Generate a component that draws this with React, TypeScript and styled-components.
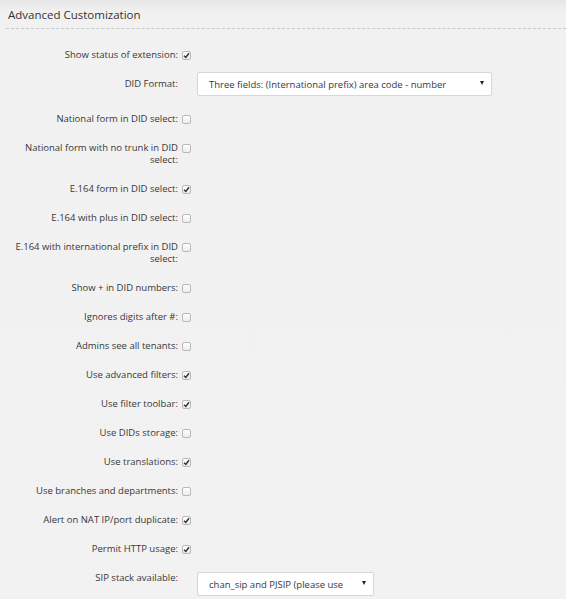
import React from "react";
import styled, { createGlobalStyle } from "styled-components";

const Global = createGlobalStyle`
  html, body {
    margin: 0;
    padding: 0;
    background: #f2f2f2;
  }
  body {
    font-family: "Open Sans", "Liberation Sans", sans-serif;
    color: #3a3a3a;
  }
`;

const Page = styled.div`
  width: 566px;
  height: 599px;
  overflow: hidden;
  background: linear-gradient(to bottom, #e6e6e6 0px, #f1f1f1 12px, #f2f2f2 100%);
`;

const Header = styled.div`
  padding: 7px 0 0 8px;
  height: 21px;
`;

const Title = styled.h2`
  margin: 0;
  font-size: 11.5px;
  font-weight: 400;
  line-height: 16px;
  color: #333;
`;

const Divider = styled.div`
  margin-left: 6px;
  height: 0;
  border-top: 1px dashed #c9c9c9;
`;

const Form = styled.div`
  display: flex;
  flex-direction: column;
  gap: 17px;
  padding-top: 20px;
`;

const Row = styled.div<{ $pull?: number }>`
  display: grid;
  grid-template-columns: 170px auto;
  column-gap: 4px;
  align-items: center;
  padding-left: 8px;
  margin-top: ${(p) => (p.$pull ? `-${p.$pull}px` : "0")};
`;

const Label = styled.label<{ $top?: boolean }>`
  font-size: 9.5px;
  line-height: 12px;
  text-align: right;
  color: #383838;
  align-self: ${(p) => (p.$top ? "start" : "center")};
`;

const Box = styled.span<{ $checked: boolean }>`
  display: inline-flex;
  align-items: center;
  justify-content: center;
  width: 9px;
  height: 9px;
  box-sizing: border-box;
  border: 1px solid #b9b9b9;
  border-radius: 2px;
  background: linear-gradient(to bottom, #ffffff, #ececec);
  align-self: start;
  margin-top: 2px;
`;

const Select = styled.div<{ $width: number }>`
  display: flex;
  align-items: center;
  justify-content: space-between;
  box-sizing: border-box;
  width: ${(p) => p.$width}px;
  height: 24px;
  margin-left: 15px;
  padding: 0 7px 0 11px;
  background: #fff;
  border: 1px solid #d6d6d6;
  border-radius: 2px;
  font-size: 9.5px;
  color: #383838;
  white-space: nowrap;
  overflow: hidden;
`;

const Caret = styled.span`
  width: 0;
  height: 0;
  border-left: 2.5px solid transparent;
  border-right: 2.5px solid transparent;
  border-top: 4px solid #222;
  margin-top: -2px;
`;

const Check = ({ on }: { on: boolean }) => (
  <Box $checked={on}>
    {on && (
      <svg width="7" height="7" viewBox="0 0 7 7">
        <path d="M1 3.8 L2.8 5.5 L6 1.2" fill="none" stroke="#333" strokeWidth="1.5" />
      </svg>
    )}
  </Box>
);

type Item =
  | { kind: "check"; label: string; on: boolean }
  | {
      kind: "select";
      label: string;
      value: string;
      width: number;
      pull?: number;
      labelTop?: boolean;
    };

const items: Item[] = [
  { kind: "check", label: "Show status of extension:", on: true },
  {
    kind: "select",
    label: "DID Format:",
    value: "Three fields: (International prefix) area code - number",
    width: 295,
    pull: 6,
  },
  { kind: "check", label: "National form in DID select:", on: false },
  { kind: "check", label: "National form with no trunk in DID select:", on: false },
  { kind: "check", label: "E.164 form in DID select:", on: true },
  { kind: "check", label: "E.164 with plus in DID select:", on: false },
  { kind: "check", label: "E.164 with international prefix in DID select:", on: false },
  { kind: "check", label: "Show + in DID numbers:", on: false },
  { kind: "check", label: "Ignores digits after #:", on: false },
  { kind: "check", label: "Admins see all tenants:", on: false },
  { kind: "check", label: "Use advanced filters:", on: true },
  { kind: "check", label: "Use filter toolbar:", on: true },
  { kind: "check", label: "Use DIDs storage:", on: false },
  { kind: "check", label: "Use translations:", on: true },
  { kind: "check", label: "Use branches and departments:", on: false },
  { kind: "check", label: "Alert on NAT IP/port duplicate:", on: true },
  { kind: "check", label: "Permit HTTP usage:", on: true },
  {
    kind: "select",
    label: "SIP stack available:",
    value: "chan_sip and PJSIP (please use",
    width: 177,
    labelTop: true,
  },
];

export default function App() {
  return (
    <Page>
      <Global />
      <Header>
        <Title>Advanced Customization</Title>
      </Header>
      <Divider />
      <Form>
        {items.map((it) =>
          it.kind === "check" ? (
            <Row key={it.label}>
              <Label $top>{it.label}</Label>
              <Check on={it.on} />
            </Row>
          ) : (
            <Row key={it.label} $pull={it.pull}>
              <Label $top={it.labelTop}>{it.label}</Label>
              <Select $width={it.width}>
                <span>{it.value}</span>
                <Caret />
              </Select>
            </Row>
          )
        )}
      </Form>
    </Page>
  );
}
